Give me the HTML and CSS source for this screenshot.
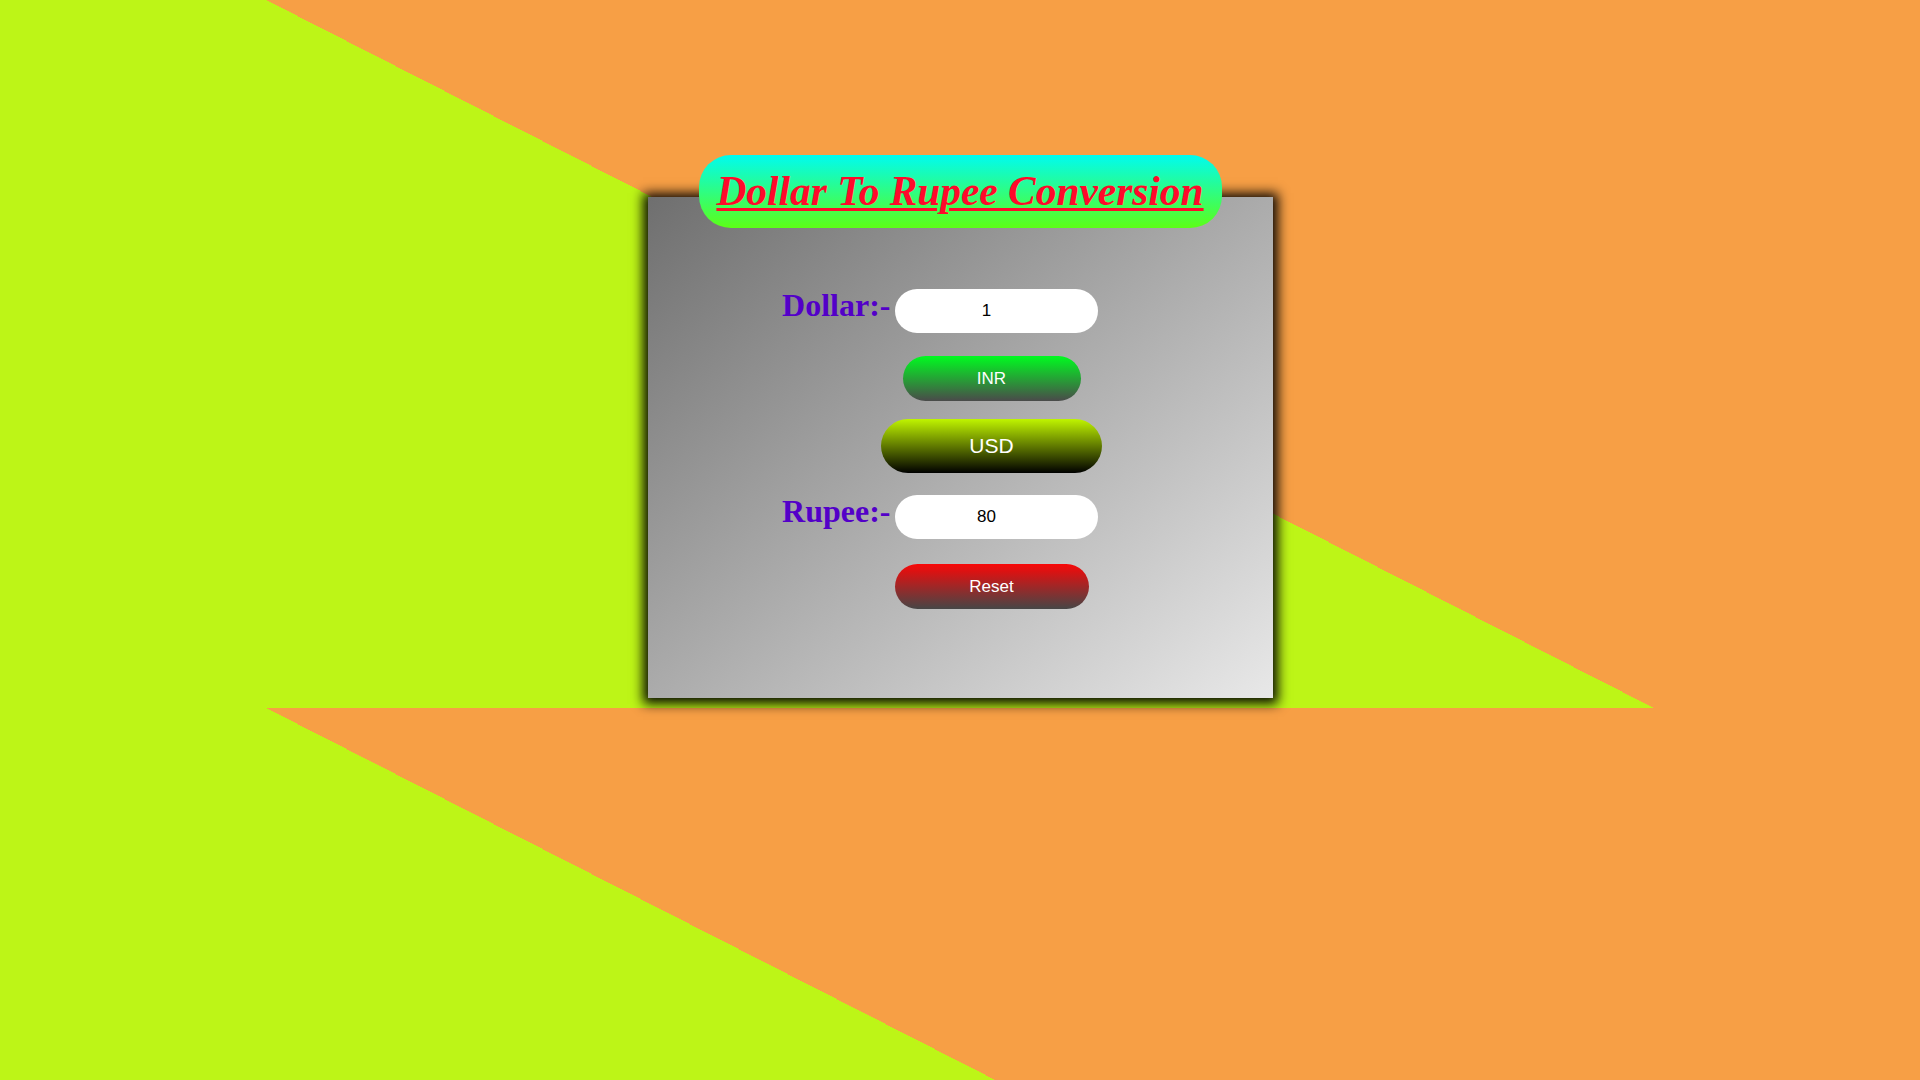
FILE: index.html
```html
<!DOCTYPE html>
<html lang="en">
<head>
<meta charset="utf-8">
<title>Dollar To Rupee Conversion</title>
<link rel="stylesheet" href="styles.css">
</head>
<body>
<main class="wrap">
  <h1 class="title"><span>Dollar To Rupee Conversion</span></h1>
  <section class="card">
    <div class="field-row">
      <label class="label" for="dollar">Dollar:-</label>
      <input class="field" id="dollar" type="text" value="1">
    </div>
    <div class="btn-row row-inr">
      <button class="btn btn-inr" type="button">INR</button>
    </div>
    <div class="btn-row row-usd">
      <button class="btn btn-usd" type="button">USD</button>
    </div>
    <div class="field-row row-rupee">
      <label class="label" for="rupee">Rupee:-</label>
      <input class="field" id="rupee" type="text" value="80">
    </div>
    <div class="btn-row row-reset">
      <button class="btn btn-reset" type="button">Reset</button>
    </div>
  </section>
</main>
</body>
</html>
```
FILE: styles.css
```css
html {
  background: linear-gradient(27.03deg, #bdf517 50%, #f79f45 50%) 0 0 / 100% 708px repeat;
  min-height: 100%;
}

body {
  margin: 0;
  min-height: 1080px;
  font-family: "Liberation Serif", "Times New Roman", serif;
}

.wrap {
  width: 625px;
  margin: 0 auto;
  padding-top: 155px;
  padding-bottom: 30px;
  display: flex;
  flex-direction: column;
  align-items: center;
}

.title {
  position: relative;
  z-index: 1;
  margin: 0;
  width: 523px;
  height: 73px;
  border-radius: 32px;
  background: linear-gradient(#00fbf0, #5cff16);
  text-align: center;
  font-size: 41.4px;
  line-height: 73px;
  font-weight: bold;
  font-style: italic;
  color: #ff0a2a;
}

.title span {
  text-decoration: underline;
  text-decoration-thickness: 3px;
  text-underline-offset: 3px;
}

.card {
  box-sizing: border-box;
  width: 625px;
  height: 501px;
  margin-top: -31px;
  padding-top: 90px;
  background: linear-gradient(to bottom right, #6f6f6f, #e8e8e8);
  box-shadow: 0 1px 11px 5px rgba(0, 0, 0, 0.95);
  display: flex;
  flex-direction: column;
}

.field-row {
  display: flex;
  align-items: baseline;
}

.label {
  width: 243px;
  text-align: right;
  font-size: 32px;
  font-weight: bold;
  color: #5300c8;
}

.field {
  box-sizing: border-box;
  width: 203px;
  height: 44px;
  margin-left: 4px;
  padding: 0 19px 0 0;
  border: none;
  border-radius: 22px;
  background: #fff;
  color: #000;
  text-align: center;
  font-family: "Liberation Sans", Arial, sans-serif;
  font-size: 17px;
  outline: none;
}

.btn-row {
  width: 222px;
  padding-left: 233px;
  display: flex;
  justify-content: center;
}

.btn {
  border: none;
  padding: 0;
  color: #fff;
  font-family: "Liberation Sans", Arial, sans-serif;
}

.row-inr { margin-top: 23px; }
.row-usd { margin-top: 18px; }
.row-rupee { margin-top: 20px; }
.row-reset { margin-top: 25px; }

.btn-inr {
  width: 178px;
  height: 45px;
  border-radius: 23px;
  font-size: 17px;
  background: linear-gradient(#00fb20, #4a4a4a);
}

.btn-usd {
  width: 221px;
  height: 54px;
  border-radius: 27px;
  font-size: 21px;
  background: linear-gradient(#c0f400, #000);
}

.btn-reset {
  width: 194px;
  height: 45px;
  border-radius: 23px;
  font-size: 17px;
  background: linear-gradient(#f80808, #464646);
}
```
